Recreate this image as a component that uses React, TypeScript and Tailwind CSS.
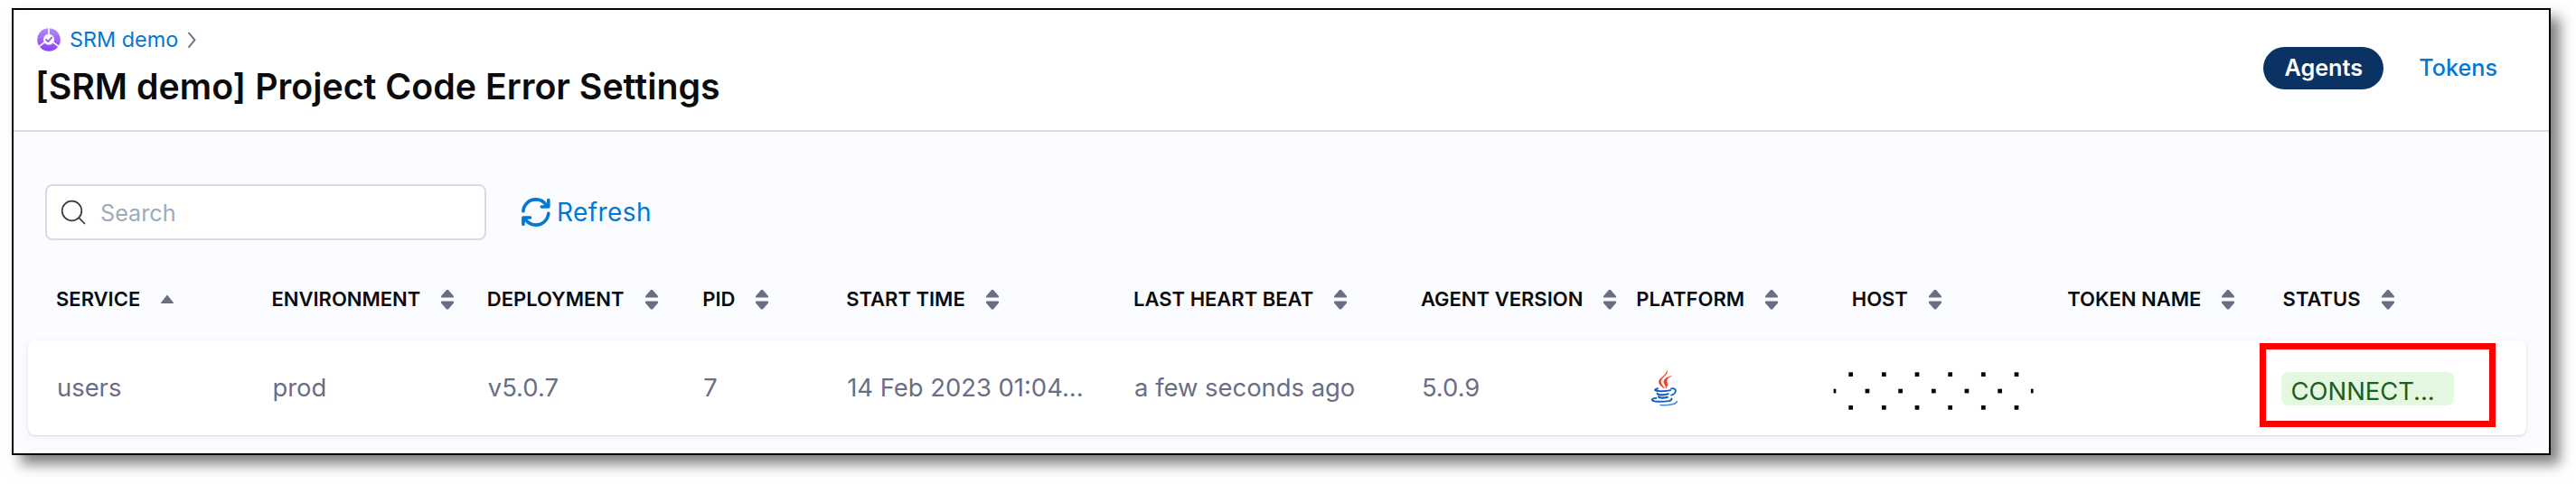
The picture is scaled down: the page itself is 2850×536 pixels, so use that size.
import type { ReactNode } from "react";

function SortIcon({ asc }: { asc?: boolean }) {
  return asc ? (
    <svg width="16" height="24" viewBox="0 0 16 24" className="shrink-0">
      <path d="M8 6.5 L15 15.2 Q15.3 16 14.4 16 H1.6 Q.7 16 1 15.2 Z" fill="#6b6d85" />
    </svg>
  ) : (
    <svg width="16" height="24" viewBox="0 0 16 24" className="shrink-0">
      <path d="M8 .8 Q8.8 .8 9.4 1.5 L15 8 Q15.6 9.6 14 9.6 H2 Q.4 9.6 1 8 L6.6 1.5 Q7.2 .8 8 .8 Z" fill="#6b6d85" />
      <path d="M8 22.7 Q8.8 22.7 9.4 22 L15 15.5 Q15.6 13.6 14 13.6 H2 Q.4 13.6 1 15.5 L6.6 22 Q7.2 22.7 8 22.7 Z" fill="#6b6d85" />
    </svg>
  );
}

function ModuleIcon() {
  return (
    <svg width="26" height="26" viewBox="0 0 26 26" className="shrink-0">
      <defs>
        <linearGradient id="module" x1="0" y1="0" x2="0" y2="1">
          <stop offset="0" stopColor="#b28cf9" />
          <stop offset="1" stopColor="#8a3ffc" />
        </linearGradient>
      </defs>
      <circle cx="13" cy="13" r="12.8" fill="url(#module)" />
      <path d="M13 0V9M2 20.6L8 16M24 20.6L18 16" stroke="#fff" strokeWidth="1.6" />
      <circle cx="13" cy="12.8" r="6" fill="#fff" />
      <path d="M10 12.8l2.2 2.2 4-4.4" fill="none" stroke="#9650fb" strokeWidth="1.8" strokeLinecap="round" strokeLinejoin="round" />
    </svg>
  );
}

function JavaIcon() {
  return (
    <svg width="32" height="40" viewBox="0 0 32 40" fill="none" strokeLinecap="round">
      <path d="M18.400 .4C20.200 5 11.600 7.600 11.600 12.700C11.600 15.500 14.400 17.600 15.400 20.200C11.600 17.800 9 15.300 9.400 12.300C10 7.900 17.600 6 18.400 .4Z" fill="#f23b30" stroke="#f23b30" strokeWidth=".4" />
      <path d="M23 6.600C19.400 8.200 17.600 10.400 18.200 13C18.600 15 19.800 16.300 17 20.200C17.400 17 14.800 15.600 14.800 12.700C14.800 9.600 18.800 7.200 23 6.600Z" fill="#f23b30" stroke="#f23b30" strokeWidth=".4" />
      <path d="M8 20.200C2 21.800 6 23.200 13 23.200C17 23.200 20 22.800 22 22.100" stroke="#1560bd" strokeWidth="2" />
      <path d="M23 20.400C28.500 19 30.200 25 23.200 27.600" stroke="#1560bd" strokeWidth="1.800" />
      <path d="M7.600 25.800C8 27.700 15 27.800 19.600 26.300" stroke="#1560bd" strokeWidth="2.200" />
      <path d="M9 29.400C9.600 31 15 31 18.800 29.800" stroke="#1560bd" strokeWidth="2.200" />
      <path d="M6.400 30.800C-1.400 31.600 1 34.800 10 34.800C18 34.800 24.600 34 23.400 31.400" stroke="#1560bd" strokeWidth="1.900" />
      <path d="M11 38.500C19 39.200 28 38 29.400 34.600" stroke="#4c86cd" strokeWidth="1.500" />
    </svg>
  );
}

function HostMask() {
  const outer = [0, 1, 2, 3, 4, 5];
  const inner = [0, 1, 2, 3, 4];
  return (
    <svg width="222" height="44" viewBox="0 0 222 44" className="-ml-[22px] mt-[6px] shrink-0">
      {outer.map((i) => (
        <g key={i}>
          <rect x={17.3 + i * 36.67} y="1.300" width="4.700" height="4.700" />
          <rect x={17.3 + i * 36.67} y="38" width="4.700" height="4.700" />
        </g>
      ))}
      {inner.map((i) => (
        <rect key={i} x={35.6 + i * 36.67} y="19.700" width="4.700" height="4.700" />
      ))}
      <rect x="0.600" y="19.700" width="2.700" height="4.700" />
      <rect x="218.900" y="19.700" width="2.700" height="4.700" />
    </svg>
  );
}

const columns: { label: string; cell: ReactNode }[] = [
  { label: "SERVICE", cell: "users" },
  { label: "ENVIRONMENT", cell: "prod" },
  { label: "DEPLOYMENT", cell: "v5.0.7" },
  { label: "PID", cell: "7" },
  { label: "START TIME", cell: "14 Feb 2023 01:04..." },
  { label: "LAST HEART BEAT", cell: "a few seconds ago" },
  { label: "AGENT VERSION", cell: "5.0.9" },
  { label: "PLATFORM", cell: <span className="block pl-[15px]"><JavaIcon /></span> },
  { label: "HOST", cell: <HostMask /> },
  { label: "TOKEN NAME", cell: null },
  {
    label: "STATUS",
    cell: (
      <span className="relative -ml-[3px] flex h-[37px] w-[191px] items-center rounded-lg bg-[#e4f7e1] pl-[11px] text-[#1b5e20]">
        <span className="mt-[7px]">CONNECT...</span>
        <span className="absolute -top-[32px] -left-[24px] h-[93px] w-[261px] border-[7px] border-[#ff0000]" />
      </span>
    ),
  },
];

const gridCols = "grid grid-cols-[6fr_6fr_6fr_4fr_8fr_8fr_6fr_6fr_6fr_6fr_6fr] items-center px-[31px]";

export default function App() {
  return (
    <div className="h-[536px] w-[2850px] overflow-hidden bg-white pt-[9px] pl-[13px] font-['Inter',sans-serif]">
      <div className="flex h-[495px] w-[2809px] flex-col border-2 border-black bg-[#fbfcff] shadow-[10px_10px_14px_rgba(0,0,0,0.5)]">
        <div className="flex flex-1 flex-col overflow-hidden">
          <header className="flex h-[135px] shrink-0 items-start justify-between border-b-2 border-[#d9dae5] bg-white pl-[26px]">
            <div className="flex flex-col">
              <nav className="mt-[17px] flex h-8 items-center text-[23.4px] leading-8 text-[#0278d5]">
                <ModuleIcon />
                <span className="ml-[10px]">SRM demo</span>
                <svg width="12" height="20" viewBox="0 0 12 20" className="ml-[9px]">
                  <path d="M2.500 2L9.500 10.300L2.500 18.600" fill="none" stroke="#6b6d85" strokeWidth="1.900" />
                </svg>
              </nav>
              <h1 className="mt-[12px] -ml-[2px] text-[39.300px] leading-[48px] font-semibold text-[#0b0b0d]">
                [SRM demo] Project Code Error Settings
              </h1>
            </div>
            <div className="mt-[41px] mr-[57px] flex h-[47px] items-center text-[25.2px]">
              <span className="flex h-[47px] w-[133px] items-center justify-center rounded-full bg-[#0a3364] font-semibold text-white">
                Agents
              </span>
              <span className="ml-[39px] font-medium text-[#0278d5]">Tokens</span>
            </div>
          </header>

          <div className="mt-[58px] ml-[35px] flex h-[62px] shrink-0 items-center">
            <div className="flex h-[62px] w-[488px] items-center rounded-lg border-2 border-[#d9dae5] bg-white pl-[15px]">
              <svg width="28" height="28" viewBox="0 0 28 28">
                <circle cx="12.500" cy="12.500" r="10.800" fill="none" stroke="#383946" strokeWidth="1.700" />
                <path d="M20.200 20.200L27 27" stroke="#383946" strokeWidth="1.700" />
              </svg>
              <span className="mt-[3px] ml-[16px] text-[25.2px] text-[#9fabb8]">Search</span>
            </div>
            <button className="ml-[39px] flex items-center text-[#0278d5]">
              <svg width="32" height="32" viewBox="0 0 32 32" fill="none" stroke="#0278d5" strokeWidth="3.600" strokeLinecap="round" strokeLinejoin="round">
                <path d="M1.900 14.800C2.400 7.500 8.400 1.900 15.800 1.900C20.800 1.900 25 4.400 27.600 8.500" />
                <path d="M29.800 2.600V10H22.200" />
                <path d="M29.800 17.200C29.300 24.500 23.300 30.100 15.900 30.100C10.900 30.100 6.700 27.600 4.100 23.500" />
                <path d="M24.500 9.500L29.500 4.500V9.500ZM7 22.500L2.300 27.500V22.500Z" fill="#0278d5" strokeWidth="1" />
                <path d="M1.900 29.400V22H9.500" />
              </svg>
              <span className="ml-[7px] text-[28px] tracking-[0.4px]">Refresh</span>
            </button>
          </div>

          <div className="ml-[16px] w-[2764px] shrink-0">
            <div className={`${gridCols} mt-[46px] h-[39px] text-[22px] font-semibold text-[#0b0b0d]`}>
              {columns.map((c, i) => (
                <div key={c.label} className="flex items-center whitespace-nowrap">
                  <span>{c.label}</span>
                  <span className="ml-[22px]">
                    <SortIcon asc={i === 0} />
                  </span>
                </div>
              ))}
            </div>
            <div className={`${gridCols} mt-[26px] h-[105px] rounded-lg bg-white text-[27.400px] text-[#6b6d85] shadow-[0_1px_2px_rgba(96,97,112,0.2),0_2px_8px_rgba(96,97,112,0.08)]`}>
              {columns.map((c) => (
                <div key={c.label} className="flex min-w-0 items-center pt-px pl-px whitespace-nowrap">
                  {c.cell}
                </div>
              ))}
            </div>
            <div className="mt-4 h-[105px] rounded-lg bg-white shadow-[0_0_2px_rgba(96,97,112,0.15)]" />
          </div>
        </div>
      </div>
    </div>
  );
}
